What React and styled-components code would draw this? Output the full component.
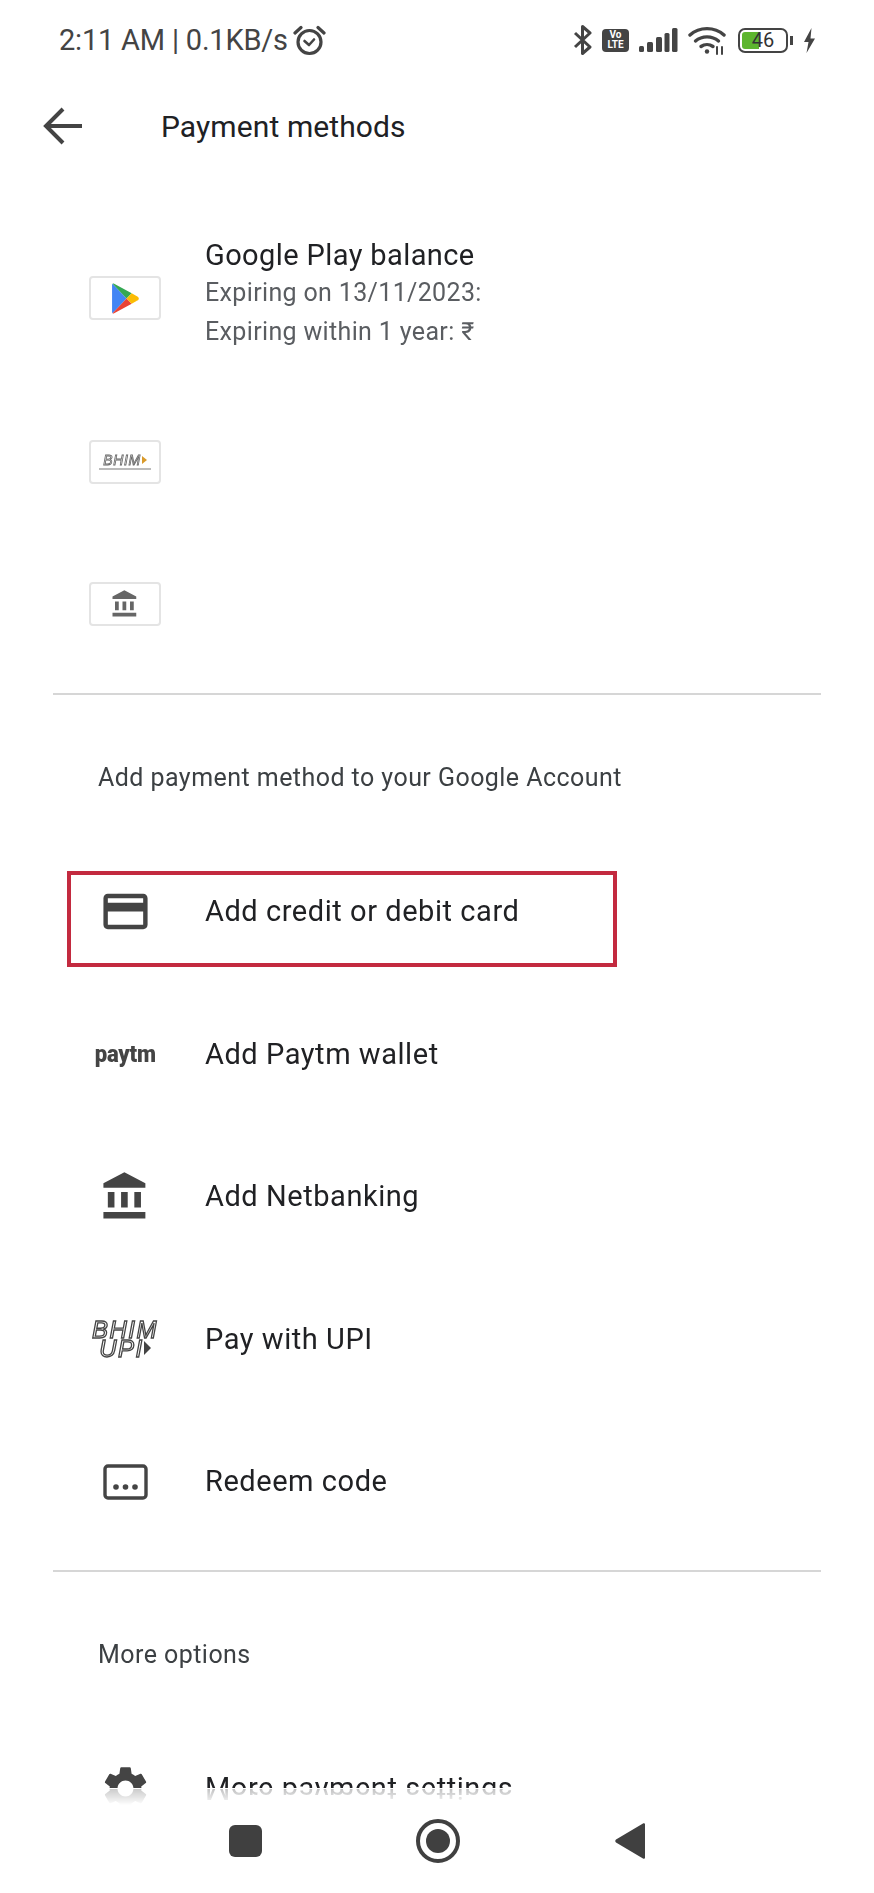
import React from 'react'
import styled, { createGlobalStyle } from 'styled-components'

const GlobalStyle = createGlobalStyle`
html, body { margin: 0; padding: 0; background: #fff; }
body { font-family: Roboto, "Liberation Sans", sans-serif; }
`
const Page = styled.div`
width: 874px;
height: 1893px;
overflow: hidden;
display: flex;
flex-direction: column;
background: #fff;
color: #202124;
`
const StatusBar = styled.div`
height: 80px;
flex: none;
display: flex;
align-items: center;
justify-content: space-between;
padding: 0 58px 0 59px;
color: #444;
`
const StatusLeft = styled.div`
display: flex;
align-items: center;
gap: 5px;
`
const Clock = styled.span`
font-size: 29px;
letter-spacing: -0.2px;
white-space: nowrap;
`
const StatusIcons = styled.div`
display: flex;
align-items: center;
gap: 10px;
`
const Volte = styled.div`
width: 27px;
height: 23px;
border-radius: 4px;
background: #444;
color: #fff;
display: flex;
flex-direction: column;
align-items: center;
justify-content: center;
font-size: 10px;
line-height: 10px;
font-weight: 700;
`
const BatteryWrap = styled.div`
display: flex;
align-items: center;
gap: 2px;
margin-left: 2px;
`
const BatteryBody = styled.div`
box-sizing: border-box;
width: 50px;
height: 25px;
border: 2.5px solid #444;
border-radius: 7px;
padding: 2px;
background: linear-gradient(to right, #5db52f 40%, transparent 40%) content-box;
color: #333;
font-size: 20px;
line-height: 16px;
text-align: center;
`
const BatteryNib = styled.div`
width: 3px;
height: 9px;
background: #444;
`
const Header = styled.div`
height: 92px;
flex: none;
display: flex;
align-items: center;
padding-left: 41px;
gap: 76px;
`
const BackIcon = styled.svg`
width: 44px;
height: 44px;
color: #444;
flex: none;
`
const Title = styled.h1`
margin: 0;
font-size: 30px;
font-weight: 400;
letter-spacing: 0.1px;
color: #202124;
`
const Scroll = styled.div`
height: 1616px;
flex: none;
overflow: hidden;
padding-top: 33.5px;
box-sizing: border-box;
-webkit-box-reflect: below 1px linear-gradient(to bottom, transparent 99%, rgba(255,255,255,0.28));
`
const Row = styled.div`
position: relative;
height: ${({ tall }) => (tall ? '185px' : '142.4px')};
display: flex;
align-items: center;
padding-left: 89px;
gap: 44px;
${({ marked }) => marked && `
&::after {
    content: "";
    position: absolute;
    left: -22px;
    left: 67px;
    top: 31px;
    width: 550px;
    height: 96px;
    box-sizing: border-box;
    border: 4px solid #c32a3f;
}
`}
`
const IconSlot = styled.div`
width: 72px;
height: 54px;
flex: none;
display: flex;
align-items: center;
justify-content: center;
color: #444;
`
const LogoBox = styled.div`
width: 72px;
height: 44px;
box-sizing: border-box;
flex: none;
border: 2px solid #e4e4e4;
border-radius: 4px;
display: flex;
flex-direction: column;
align-items: center;
justify-content: center;
color: #666;
`
const BhimMark = styled.div`
display: flex;
align-items: center;
font-size: 14px;
line-height: 12px;
font-family: "Liberation Sans", sans-serif;
font-style: italic;
letter-spacing: 0.6px;
color: #fff;
-webkit-text-stroke: 0.8px #666;
&::after {
    content: "";
    margin-left: 1px;
    border-left: 5px solid #d99a2b;
    border-top: 4px solid transparent;
    border-bottom: 4px solid transparent;
}
`
const BhimTagline = styled.div`
width: 52px;
height: 2px;
margin-top: 2px;
background: #bbb;
`
const RowLabel = styled.div`
font-size: 29px;
letter-spacing: 0.55px;
color: #202124;
white-space: nowrap;
`
const BalanceText = styled.div`
width: 276px;
overflow: hidden;
white-space: nowrap;
margin-top: -8px;
`
const BalanceTitle = styled.div`
font-size: 29px;
line-height: 36px;
letter-spacing: 0.4px;
color: #202124;
`
const BalanceLine = styled.div`
font-size: 25px;
line-height: 39px;
letter-spacing: 0.35px;
color: #5a5d61;
`
const Divider = styled.hr`
margin: 18px 53px 0;
height: 2px;
border: 0;
background: #d6d6d6;
`
const SectionTitle = styled.div`
margin: 52px 0 33px 98px;
height: 60px;
display: flex;
align-items: center;
font-size: 25px;
letter-spacing: 0.45px;
color: #3c4043;
`
const PaytmMark = styled.span`
font-size: 24px;
font-weight: 900;
letter-spacing: -0.2px;
color: #444;
transform: scaleX(0.92);
`
const UpiMark = styled.div`
display: flex;
flex-direction: column;
align-items: center;
font-family: "Liberation Sans", sans-serif;
font-style: italic;
font-size: 24px;
line-height: 19px;
letter-spacing: 1.5px;
color: #fff;
-webkit-text-stroke: 1.3px #444;
`
const UpiLine = styled.span`
display: flex;
align-items: center;
&::after {
    content: "";
    display: ${({ arrow }) => (arrow ? 'block' : 'none')};
    border-left: 7px solid #444;
    border-top: 7px solid transparent;
    border-bottom: 7px solid transparent;
}
`
const NavBar = styled.div`
height: 105px;
flex: none;
display: flex;
align-items: center;
padding-left: 229px;
gap: 154px;
background: transparent;
`
const NavSquare = styled.div`
width: 33px;
height: 32px;
border-radius: 6px;
background: #404040;
`
const NavCircle = styled.div`
width: 44px;
height: 44px;
box-sizing: border-box;
border: 4px solid #404040;
border-radius: 50%;
display: flex;
align-items: center;
justify-content: center;
&::after {
    content: "";
    width: 24px;
    height: 24px;
    border-radius: 50%;
    background: #404040;
}
`

const Material = ({ d, size = 53 }) => (
  <svg width={size} height={size} viewBox="0 0 24 24" fill="currentColor"><path d={d} /></svg>
)

const CARD = "M20 4H4c-1.11 0-1.99.89-1.99 2L2 18c0 1.11.89 2 2 2h16c1.11 0 2-.89 2-2V6c0-1.11-.89-2-2-2zm0 14H4v-6h16v6zm0-10H4V6h16v2z"
const BANK = "M4 10v7h3v-7H4zm6 0v7h3v-7h-3zM2 22h19v-3H2v3zm14-12v7h3v-7h-3zm-4.5-9L2 6v2h19V6l-9.5-5z"
const GEAR = "M19.14 12.94c.04-.3.06-.61.06-.94 0-.32-.02-.64-.07-.94l2.03-1.58a.49.49 0 0 0 .12-.61l-1.92-3.32a.488.488 0 0 0-.59-.22l-2.39.96c-.5-.38-1.03-.7-1.62-.94l-.36-2.54a.484.484 0 0 0-.48-.41h-3.84c-.24 0-.43.17-.47.41l-.36 2.54c-.59.24-1.13.57-1.62.94l-2.39-.96c-.22-.08-.47 0-.59.22L2.74 8.87c-.12.21-.08.47.12.61l2.03 1.58c-.05.3-.09.63-.09.94s.02.64.07.94l-2.03 1.58a.49.49 0 0 0-.12.61l1.92 3.32c.12.22.37.29.59.22l2.39-.96c.5.38 1.03.7 1.62.94l.36 2.54c.05.24.24.41.48.41h3.84c.24 0 .44-.17.47-.41l.36-2.54c.59-.24 1.13-.56 1.62-.94l2.39.96c.22.08.47 0 .59-.22l1.92-3.32c.12-.22.07-.47-.12-.61l-2.01-1.58zM12 15.6c-1.98 0-3.6-1.62-3.6-3.6s1.62-3.6 3.6-3.6 3.6 1.62 3.6 3.6-1.62 3.6-3.6 3.6z"

const PlayLogo = () => (
  <svg width="28" height="31" viewBox="0 0 27 30">
    <path fill="#4285f4" d="M1 2v26c0 .6.2 1 .5 1.2L15 15 1.5.8C1.200 1 1 1.400 1 2z" />
    <path fill="#34a853" d="M1.500.8c.4-.3 1-.3 1.500 0L20 10l-5 5z" />
    <path fill="#ea4335" d="M1.500 29.200c.4.300 1 .3 1.500 0L20 20l-5-5z" />
    <path fill="#fbbc04" d="M20 10l5.500 3c1.800 1 1.800 3 0 4L20 20l-5-5z" />
  </svg>
)

const RedeemIcon = () => (
  <svg width="53" height="53" viewBox="0 0 53 53" fill="none">
    <rect x="6" y="11" width="41" height="32" rx="3" stroke="currentColor" strokeWidth="3.4" />
    <circle cx="17" cy="32" r="2.8" fill="currentColor" />
    <circle cx="26.500" cy="32" r="2.8" fill="currentColor" />
    <circle cx="36" cy="32" r="2.8" fill="currentColor" />
  </svg>
)

const AlarmIcon = () => (
  <svg width="33" height="31" viewBox="0 0 33 31" fill="none" stroke="currentColor" strokeWidth="3.2" strokeLinecap="round" strokeLinejoin="round">
    <circle cx="16.500" cy="17" r="11.500" />
    <path d="M11.500 16l4.500 4 5-5.500" strokeWidth="2.6" />
    <path d="M2 8l6-5.500M31 8l-6-5.500" />
  </svg>
)

const BluetoothIcon = () => (
  <svg width="19" height="30" viewBox="0 0 19 30" fill="none" stroke="currentColor" strokeWidth="3" strokeLinejoin="round">
    <path d="M2 8l15 14-7.500 6.500v-27L17 8 2 22" />
  </svg>
)

const SignalIcon = () => (
  <svg width="39" height="25" viewBox="0 0 39 25" fill="currentColor">
    <rect x="0" y="18" width="5" height="6" rx="1.500" />
    <rect x="8" y="14" width="6" height="10" rx="1.500" />
    <rect x="17" y="9" width="6" height="15" rx="1.500" />
    <rect x="25.500" y="5" width="5" height="19" rx="1.500" />
    <rect x="33" y="0" width="5.500" height="24" rx="1.500" />
  </svg>
)

const WifiIcon = () => (
  <svg width="38" height="29" viewBox="0 0 38 29" fill="none" stroke="currentColor" strokeWidth="3.400" strokeLinecap="round">
    <path d="M2 9c9.500-8.500 24.500-8.500 34 0" />
    <path d="M7.500 15c6.500-5.500 16.500-5.500 23 0" />
    <path d="M13 20.500c3.500-2.500 8.500-2.500 12 0" />
    <circle cx="19" cy="25.500" r="2.200" fill="currentColor" stroke="none" />
    <path d="M29 21v7M34 21v7" strokeWidth="2" />
  </svg>
)

const BoltIcon = () => (
  <svg width="13" height="25" viewBox="0 0 13 25" fill="currentColor">
    <path d="M8.500 0L1 14h4.500L3.500 25 12 10.500H7.500z" />
  </svg>
)

const App = () => {
  return (
    <Page>
      <GlobalStyle />
      <StatusBar>
        <StatusLeft>
          <Clock>2:11 AM | 0.1KB/s</Clock>
          <AlarmIcon />
        </StatusLeft>
        <StatusIcons>
          <BluetoothIcon />
          <Volte><span>Vo</span><span>LTE</span></Volte>
          <SignalIcon />
          <WifiIcon />
          <BatteryWrap>
            <BatteryBody>46</BatteryBody>
            <BatteryNib />
          </BatteryWrap>
          <BoltIcon />
        </StatusIcons>
      </StatusBar>
      <Header>
        <BackIcon viewBox="0 0 44 44" fill="none" stroke="currentColor" strokeWidth="4">
          <path d="M41 22H7M22 5L5 22l17 17" />
        </BackIcon>
        <Title>Payment methods</Title>
      </Header>
      <Scroll>
        <Row tall>
          <LogoBox><PlayLogo /></LogoBox>
          <BalanceText>
            <BalanceTitle>Google Play balance</BalanceTitle>
            <BalanceLine>Expiring on 13/11/2023: ₹</BalanceLine>
            <BalanceLine>Expiring within 1 year: ₹</BalanceLine>
          </BalanceText>
        </Row>
        <Row>
          <LogoBox>
            <BhimMark>BHIM</BhimMark>
            <BhimTagline />
          </LogoBox>
        </Row>
        <Row>
          <LogoBox><Material d={BANK} size={30} /></LogoBox>
        </Row>
        <Divider />
        <SectionTitle>Add payment method to your Google Account</SectionTitle>
        <Row marked>
          <IconSlot><Material d={CARD} /></IconSlot>
          <RowLabel>Add credit or debit card</RowLabel>
        </Row>
        <Row>
          <IconSlot><PaytmMark>paytm</PaytmMark></IconSlot>
          <RowLabel>Add Paytm wallet</RowLabel>
        </Row>
        <Row>
          <IconSlot><Material d={BANK} /></IconSlot>
          <RowLabel>Add Netbanking</RowLabel>
        </Row>
        <Row>
          <IconSlot>
            <UpiMark>
              <UpiLine>BHIM</UpiLine>
              <UpiLine arrow>UPI</UpiLine>
            </UpiMark>
          </IconSlot>
          <RowLabel>Pay with UPI</RowLabel>
        </Row>
        <Row>
          <IconSlot><RedeemIcon /></IconSlot>
          <RowLabel>Redeem code</RowLabel>
        </Row>
        <Divider />
        <SectionTitle>More options</SectionTitle>
        <Row>
          <IconSlot><Material d={GEAR} /></IconSlot>
          <RowLabel>More payment settings</RowLabel>
        </Row>
      </Scroll>
      <NavBar>
        <NavSquare />
        <NavCircle />
        <svg width="32" height="38" viewBox="0 0 32 38" fill="#404040">
          <path d="M29 1.500c1-.7 2 0 2 1v33c0 1-1 1.700-2 1L2 20.500c-1-.8-1-2 0-3z" />
        </svg>
      </NavBar>
    </Page>
  )
}

export default App
